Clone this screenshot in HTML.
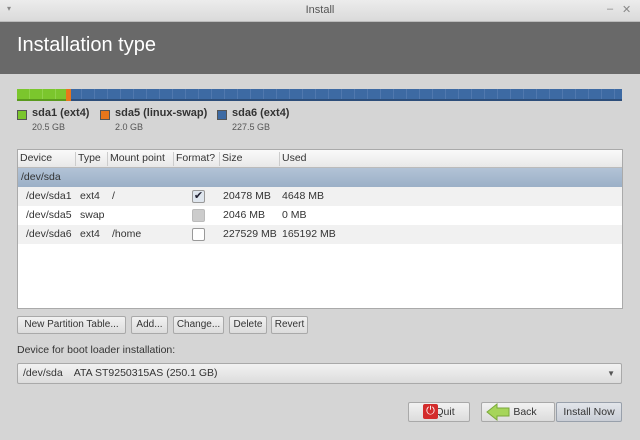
<!DOCTYPE html>
<html><head><style>
*{margin:0;padding:0;box-sizing:border-box}
body{width:640px;height:440px;overflow:hidden;background:#d5d5d5;font-family:"Liberation Sans",sans-serif;font-size:11px;color:#333;position:relative}
.a{position:absolute}
.btn{position:absolute;border:1px solid #a9a9a9;border-radius:2px;background:linear-gradient(#f2f2f2,#dcdcdc);font-size:10px;color:#333;text-align:center;line-height:16px;white-space:nowrap}
.row{position:absolute;left:18px;width:604px;height:19px;line-height:19px;font-size:10.5px}
.row span{position:absolute}
.cb{position:absolute;left:174px;top:3px;width:13px;height:13px;border:1px solid #999;border-radius:2px;background:#fff}
</style></head><body>
<div class="a" style="left:0;top:0;width:640px;height:22px;background:linear-gradient(#ececec,#dadada);border-bottom:1px solid #bbb"></div>
<div class="a" style="left:7px;top:4px;font-size:8px;color:#888">▾</div>
<div class="a" style="left:0;top:4px;width:640px;text-align:center;font-size:11px;color:#555">Install</div>
<div class="a" style="left:607px;top:3px;font-size:11px;color:#888">–</div>
<div class="a" style="left:622px;top:3px;font-size:11px;color:#888">✕</div>
<div class="a" style="left:0;top:22px;width:640px;height:52px;background:#696969"></div>
<div class="a" style="left:17px;top:34px;font-size:20px;color:#fff">Installation type</div>
<div class="a" style="left:17px;top:89px;width:605px;height:12px;background:repeating-linear-gradient(90deg,#3d6aa3 0 12px,#5078ae 12px 13px);border-bottom:2px solid #2d4e7a"></div>
<div class="a" style="left:17px;top:89px;width:49px;height:12px;background:repeating-linear-gradient(90deg,#7bc62d 0 12px,#8fd24a 12px 13px);border-bottom:2px solid #5a9a1e"></div>
<div class="a" style="left:66px;top:89px;width:5px;height:12px;background:#e8761b"></div>
<div class="a" style="left:17px;top:110px;width:10px;height:10px;background:#7bc62d;border:1px solid #555"></div>
<div class="a" style="left:32px;top:107px;font-size:11px;font-weight:bold;color:#333">sda1 (ext4)</div>
<div class="a" style="left:32px;top:122px;font-size:9px;color:#555">20.5 GB</div>
<div class="a" style="left:100px;top:110px;width:10px;height:10px;background:#e8761b;border:1px solid #555"></div>
<div class="a" style="left:115px;top:107px;font-size:11px;font-weight:bold;color:#333">sda5 (linux-swap)</div>
<div class="a" style="left:115px;top:122px;font-size:9px;color:#555">2.0 GB</div>
<div class="a" style="left:217px;top:110px;width:10px;height:10px;background:#3d6aa3;border:1px solid #555"></div>
<div class="a" style="left:232px;top:107px;font-size:11px;font-weight:bold;color:#333">sda6 (ext4)</div>
<div class="a" style="left:232px;top:122px;font-size:9px;color:#555">227.5 GB</div>
<div class="a" style="left:17px;top:149px;width:606px;height:160px;background:#fff;border:1px solid #aaa"></div>
<div class="row" style="top:150px;background:linear-gradient(#fafafa,#e8e8e8);border-bottom:1px solid #bbb;height:18px;line-height:17px">
<span style="left:2px">Device</span><span style="left:60px">Type</span><span style="left:92px">Mount point</span><span style="left:158px">Format?</span><span style="left:204px">Size</span><span style="left:264px">Used</span>
<span style="left:57px;top:2px;height:14px;border-left:1px solid #ccc"></span><span style="left:89px;top:2px;height:14px;border-left:1px solid #ccc"></span><span style="left:155px;top:2px;height:14px;border-left:1px solid #ccc"></span><span style="left:201px;top:2px;height:14px;border-left:1px solid #ccc"></span><span style="left:261px;top:2px;height:14px;border-left:1px solid #ccc"></span>
</div>
<div class="row" style="top:168px;background:linear-gradient(#b2c3d6,#9bb0c7)"><span style="left:3px">/dev/sda</span></div>
<div class="row" style="top:187px;background:#f1f1f1"><span style="left:8px">/dev/sda1</span><span style="left:62px">ext4</span><span style="left:94px">/</span><div class="cb" style="background:#dfe6ee;text-align:center;line-height:11px;font-size:11px;color:#223">✔</div><span style="left:205px">20478 MB</span><span style="left:264px">4648 MB</span></div>
<div class="row" style="top:206px;background:#fff"><span style="left:8px">/dev/sda5</span><span style="left:62px">swap</span><div class="cb" style="background:#ccc;border-color:#bbb"></div><span style="left:205px">2046 MB</span><span style="left:264px">0 MB</span></div>
<div class="row" style="top:225px;background:#f1f1f1"><span style="left:8px">/dev/sda6</span><span style="left:62px">ext4</span><span style="left:94px">/home</span><div class="cb"></div><span style="left:205px">227529 MB</span><span style="left:264px">165192 MB</span></div>
<div class="btn" style="left:17px;top:316px;width:109px;height:18px">New Partition Table...</div>
<div class="btn" style="left:131px;top:316px;width:37px;height:18px">Add...</div>
<div class="btn" style="left:173px;top:316px;width:51px;height:18px">Change...</div>
<div class="btn" style="left:229px;top:316px;width:38px;height:18px">Delete</div>
<div class="btn" style="left:271px;top:316px;width:37px;height:18px">Revert</div>
<div class="a" style="left:17px;top:344px;font-size:10.5px">Device for boot loader installation:</div>
<div class="btn" style="left:17px;top:363px;width:605px;height:21px;text-align:left;line-height:19px;padding-left:5px;font-size:10.5px">/dev/sda&nbsp;&nbsp;&nbsp; ATA ST9250315AS (250.1 GB)<span style="position:absolute;right:6px;font-size:8px;color:#555">▼</span></div>
<div class="btn" style="left:408px;top:402px;width:62px;height:20px;line-height:18px;padding-left:12px;font-size:10.5px">Quit</div>
<div class="a" style="left:423px;top:404px;width:15px;height:15px;background:#d32c2c;border-radius:2px;color:#fff;font-size:11px;text-align:center;line-height:15px">⏻</div>
<div class="btn" style="left:481px;top:402px;width:74px;height:20px;line-height:18px;padding-left:14px;font-size:10.5px">Back</div>
<svg class="a" style="left:485px;top:403px" width="28" height="18"><path d="M2 9 L12 1 V5 H24 V13 H12 V17 Z" fill="#a6d55a" stroke="#7aa83a"/></svg>
<div class="btn" style="left:556px;top:402px;width:66px;height:20px;line-height:18px;background:linear-gradient(#e2e5ea,#c9ced6);border-color:#98a0ab;font-size:10.5px">Install Now</div>
</body></html>
